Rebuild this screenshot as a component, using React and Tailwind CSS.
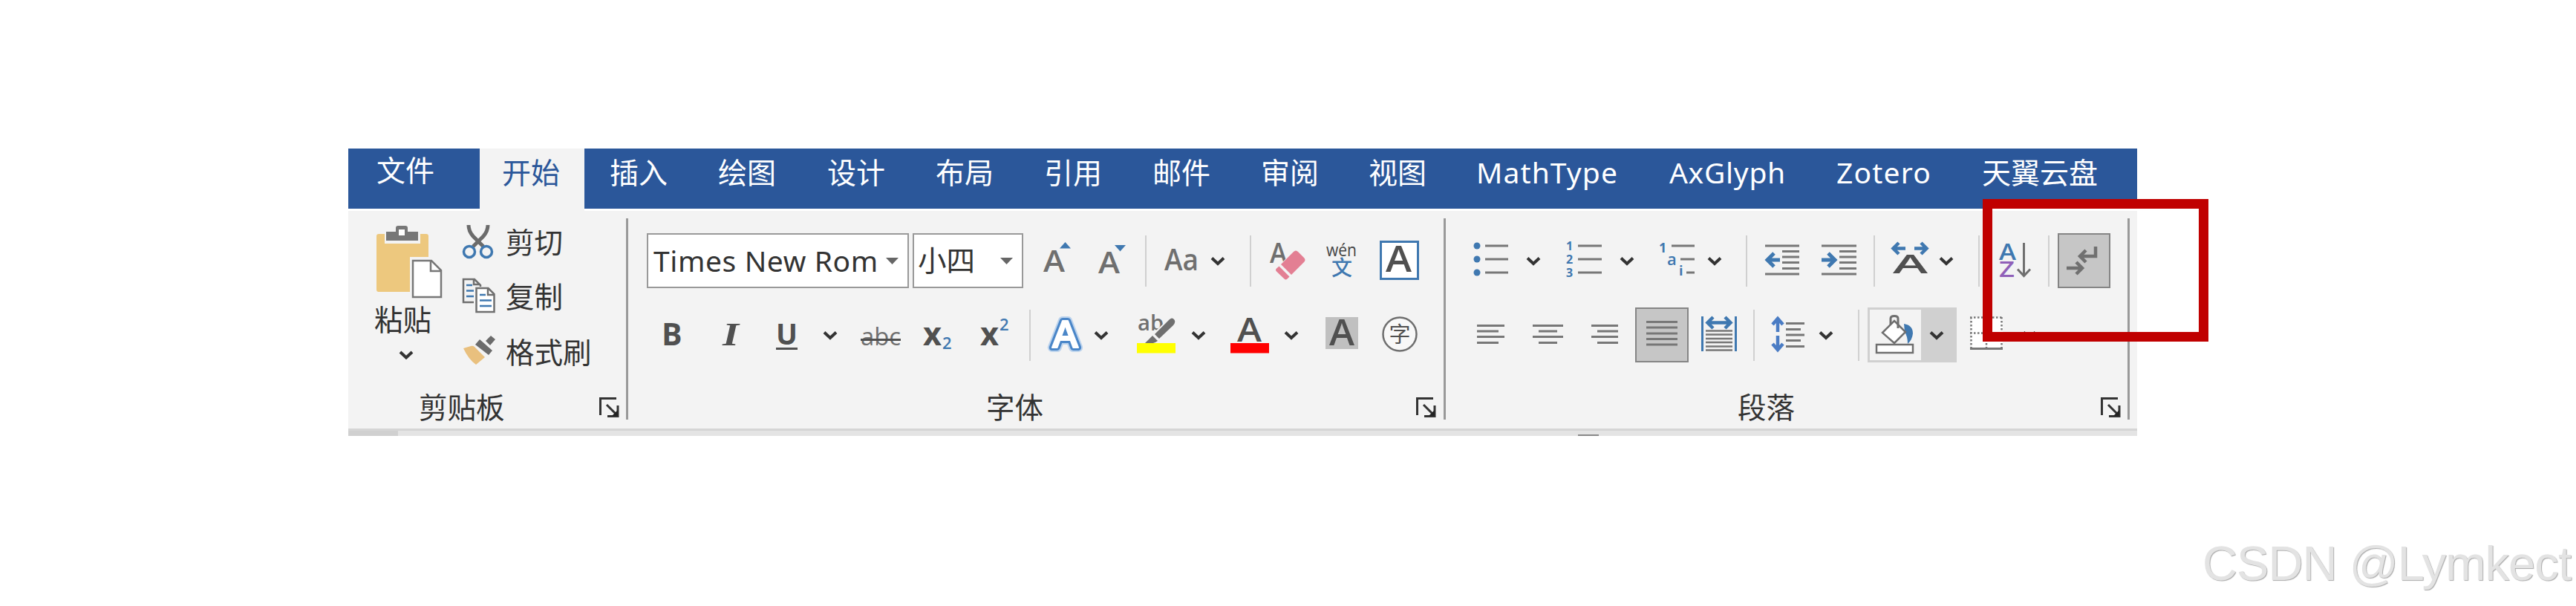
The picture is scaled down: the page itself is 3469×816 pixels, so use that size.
import React from "react";

const BLUE = "#3f78b0";
const GRAY = "#6f6f6f";
const DARK = "#505050";

const tabs = [
  { label: "插入", style: "w-[146px]" },
  { label: "绘图", style: "w-[147px]" },
  { label: "设计", style: "w-[146px]" },
  { label: "布局", style: "w-[146px]" },
  { label: "引用", style: "w-[146px]" },
  { label: "邮件", style: "w-[146px]" },
  { label: "审阅", style: "w-[145px]" },
  { label: "视图", style: "w-[145px]" },
  { label: "MathType", style: "w-[260px] tracking-[1.1px]" },
  { label: "AxGlyph", style: "w-[225px] tracking-[0.7px]" },
  { label: "Zotero", style: "w-[196px] tracking-[1.2px]" },
  { label: "天翼云盘", style: "w-[200px]" },
];

// Every toolbar icon is as tall as a toolbar row
const Icon = ({ w, className = "", children }) => (
  <svg
    width={w}
    height="74"
    viewBox={`0 0 ${w} 74`}
    fill="none"
    className={`shrink-0 overflow-visible font-['Open_Sans','Noto_Sans_CJK_SC',sans-serif] ${className}`}
  >
    {children}
  </svg>
);

const Chevron = ({ className = "" }) => (
  <Icon w={20} className={className}>
    <path d="M2 33.5l8 7.5 8-7.5" stroke="#333" strokeWidth="4" />
  </Icon>
);

const Divider = ({ className = "" }) => (
  <div className={`h-[69px] w-[2px] shrink-0 bg-[#d0d0d0] ${className}`} />
);

const GroupLine = () => (
  <div className="mt-[10px] h-[271px] w-[3px] shrink-0 bg-[#999]" />
);

// rows: list of [x1, x2, y]
const Lines = ({ rows, width = 3 }) => (
  <path
    d={rows.map(([a, b, y]) => `M${a} ${y}H${b}`).join("")}
    stroke="#777"
    strokeWidth={width}
  />
);

const Launcher = () => (
  <svg width="27" height="27" viewBox="0 0 27 27" fill="none" stroke="#333" strokeWidth="3">
    <path d="M1.5 24V1.5H23" />
    <path d="M10 10l14 14M25 11v14.5H11" />
    <path d="M25 17v8h-8z" fill="#222" stroke="none" />
  </svg>
);

const GroupLabel = ({ children, className }) => (
  <div className={`flex h-[44px] items-center text-[38.5px] leading-none text-[#333] ${className}`}>
    {children}
  </div>
);

const Combo = ({ text, className }) => (
  <div className={`flex h-[74px] shrink-0 items-center justify-between border-[2.5px] border-[#999] bg-white text-[#333] ${className}`}>
    <span className="whitespace-nowrap">{text}</span>
    <svg width="17" height="9" viewBox="0 0 17 9" className="shrink-0">
      <path d="M0 0h17l-8.5 9z" fill="#666" />
    </svg>
  </div>
);

const TabBar = () => (
  <div className="flex h-[81px] bg-[#2b579a] text-[39px] leading-none text-white">
    <div className="w-[177px] pt-[9px] pl-[38px]">文件</div>
    <div className="h-[85px] w-[141px] bg-[#f3f3f3] pt-[12px] pl-[30px] text-[#2b579a]">开始</div>
    <div className="flex pt-[12px] pl-[34px]">
      {tabs.map((t) => (
        <div key={t.label} className={`shrink-0 whitespace-nowrap ${t.style}`}>
          {t.label}
        </div>
      ))}
    </div>
  </div>
);

const ClipboardGroup = () => (
  <div className="flex w-[377px]">
    <div className="w-[374px]">
      <div className="flex h-[242px] text-[38.5px] leading-none text-[#333]">
        <div className="flex w-[147px] flex-col pt-[20px] pl-[35px]">
          <svg width="92" height="98" viewBox="0 0 92 98" fill="none" className="ml-[2px]">
            <rect x="1" y="11" width="70" height="78" rx="3" fill="#edc87e" />
            <path d="M12 8h48v16H12z" fill="#f3f3f3" />
            <path d="M14 8h13V3q0-3 3-3h10q3 0 3 3v5h14v12H14z" fill="#777" />
            <rect x="31" y="5" width="8" height="8" fill="#fff" />
            <path d="M46 42h46v56H46z" fill="#f3f3f3" />
            <path d="M50 47h25l13 13v36H50z" fill="#fff" stroke="#777" strokeWidth="2.5" />
            <path d="M74 47v14h14" stroke="#777" strokeWidth="2.5" />
          </svg>
          <span className="mt-[9px] whitespace-nowrap">粘贴</span>
          <svg width="20" height="12" viewBox="0 0 20 12" fill="none" className="mt-[22px] ml-[33px]">
            <path d="M2 2l8 7.5L18 2" stroke="#333" strokeWidth="4" />
          </svg>
        </div>
        <div className="flex flex-col pt-[16px] pl-[6px]">
          <div className="flex h-[52px] gap-[14px]">
            <svg width="45" height="50" viewBox="0 0 45 50" fill="none">
              <path d="M9 3q0 8 6 15l14 14M35 3q0 8-6 15L15 32" stroke="#6b6b6b" strokeWidth="5" />
              <circle cx="10" cy="39" r="7.5" stroke={BLUE} strokeWidth="3.5" />
              <circle cx="33" cy="39" r="7.5" stroke={BLUE} strokeWidth="3.5" />
            </svg>
            <span className="mt-[7px]">剪切</span>
          </div>
          <div className="mt-[22px] flex h-[52px] gap-[14px]">
            <svg width="45" height="48" viewBox="0 0 45 48" fill="none" strokeWidth="2.5">
              <path d="M16 33H2V2h15l8 8v2M16 2v7h9" stroke={GRAY} />
              <path d="M6 10h8M6 17.5h10M6 25h10" stroke={BLUE} />
              <path d="M19.5 14h16l8 8v24h-24z" fill="#fff" stroke={GRAY} />
              <path d="M35 14v9h8" stroke={GRAY} />
              <path d="M24 23h8M24 30.5h16M24 38h16" stroke={BLUE} />
            </svg>
            <span className="mt-[6px]">复制</span>
          </div>
          <div className="mt-[26px] flex h-[52px] gap-[14px]">
            <svg width="45" height="44" viewBox="0 0 45 44" fill="none">
              <path d="M2 17l10-3q3-1 5 1l14 14-12 10q-10-7-17-22z" fill="#e9c07e" />
              <path d="M18 12l6-7 17 15-5 6z" fill="#6b6b6b" />
              <path d="M32 7l7-7 6 5-7 8z" fill="#6b6b6b" />
            </svg>
            <span className="mt-[3px] whitespace-nowrap">格式刷</span>
          </div>
        </div>
      </div>
      <div className="flex items-center">
        <GroupLabel className="w-[338px] pl-[95px]">剪贴板</GroupLabel>
        <Launcher />
      </div>
    </div>
    <GroupLine />
  </div>
);

const FontGroup = () => (
  <div className="flex w-[1101px]">
    <div className="w-[1098px] pt-[30px]">
      <div className="flex items-center">
        <Combo text="Times New Rom" className="ml-[25px] w-[353px] pr-[12px] pl-[7px] text-[39px] tracking-[0.6px]" />
        <Combo text="小四" className="ml-[5px] w-[149px] pr-[12px] pl-[5px] text-[38.5px]" />
        <Icon w={38} className="ml-[27px]">
          <text x="0" y="52" fontSize="39" fontWeight="600" fill={GRAY} textLength="29" lengthAdjust="spacingAndGlyphs">A</text>
          <path d="M22 20.5L29.5 12l7.5 8.5z" fill={BLUE} />
        </Icon>
        <Icon w={38} className="ml-[36px]">
          <text x="0" y="54" fontSize="39" fontWeight="600" fill={GRAY} textLength="29" lengthAdjust="spacingAndGlyphs">A</text>
          <path d="M22 16l7.5 8.5L37 16z" fill={BLUE} />
        </Icon>
        <Divider className="ml-[25px]" />
        <Icon w={46} className="ml-[24px]">
          <text x="0" y="49.5" fontSize="39" fontWeight="600" fill={GRAY} textLength="46" lengthAdjust="spacingAndGlyphs">Aa</text>
        </Icon>
        <Chevron className="ml-[16px]" />
        <Divider className="ml-[33px]" />
        <Icon w={48} className="ml-[25px]">
          <text x="0" y="40" fontSize="37" fontWeight="600" fill={GRAY} textLength="23" lengthAdjust="spacingAndGlyphs">A</text>
          <path d="M34 22l14 12-23 29L7 49z" fill="#f3f3f3" />
          <path d="M32 25q3-3 6 0l8 8q3 3 0 6L29 56 15 42z" fill="#e37f93" />
          <path d="M12.5 44.5l14 14-3 3q-2 2-4 0L9 51.5q-2-2 0-4z" fill="#e37f93" />
        </Icon>
        <Icon w={43} className="ml-[27px]">
          <text x="1" y="31" fontSize="23" fontWeight="500" fill="#444" textLength="41" lengthAdjust="spacingAndGlyphs">wén</text>
          <text x="8" y="57" fontSize="28" fontWeight="500" fill={BLUE}>文</text>
        </Icon>
        <Icon w={53} className="ml-[30px]">
          <rect x="1.5" y="11.5" width="50" height="50" fill="#fff" stroke={BLUE} strokeWidth="3" />
          <text x="8" y="51.5" fontSize="49" fontWeight="600" fill={DARK} textLength="35" lengthAdjust="spacingAndGlyphs">A</text>
        </Icon>
      </div>

      <div className="mt-[26px] flex items-center">
        <Icon w={27} className="ml-[46px]">
          <text x="-1" y="50.5" fontSize="41" fontWeight="700" fill={DARK}>B</text>
        </Icon>
        <Icon w={26} className="ml-[53px]">
          <text x="1" y="50.5" fontSize="45" fontWeight="700" fontStyle="italic" fill={DARK} fontFamily="Liberation Serif" textLength="22" lengthAdjust="spacingAndGlyphs">I</text>
        </Icon>
        <Icon w={31} className="ml-[46px]">
          <text x="1" y="50" fontSize="40" fontWeight="700" fill={DARK} textLength="29" lengthAdjust="spacingAndGlyphs">U</text>
          <path d="M1 55.5h29" stroke={DARK} strokeWidth="3" />
        </Icon>
        <Chevron className="ml-[33px]" />
        <Icon w={54} className="ml-[31px]">
          <text x="0" y="51" fontSize="33" fontWeight="500" fill={GRAY} textLength="54" lengthAdjust="spacingAndGlyphs">abc</text>
          <path d="M0 43.5h54" stroke={DARK} strokeWidth="3" />
        </Icon>
        <Icon w={41} className="ml-[30px]">
          <text x="0" y="50.5" fontSize="43" fontWeight="700" fill={DARK} textLength="25" lengthAdjust="spacingAndGlyphs">x</text>
          <text x="26" y="56" fontSize="22" fontWeight="600" fill={BLUE}>2</text>
        </Icon>
        <Icon w={40} className="ml-[36px]">
          <text x="0" y="50.5" fontSize="43" fontWeight="700" fill={DARK} textLength="25" lengthAdjust="spacingAndGlyphs">x</text>
          <text x="26" y="31" fontSize="22" fontWeight="600" fill={BLUE}>2</text>
        </Icon>
        <Divider className="ml-[26px]" />
        <Icon w={41} className="ml-[26px]">
          <g fontSize="51" fontWeight="600" strokeLinejoin="round">
            <text x="3" y="54" stroke="#bcd3ed" strokeWidth="12" textLength="35" lengthAdjust="spacingAndGlyphs">A</text>
            <text x="3" y="54" stroke="#4a86c8" strokeWidth="8" textLength="35" lengthAdjust="spacingAndGlyphs">A</text>
            <text x="3" y="54" fill="#fff" stroke="#fff" strokeWidth="2" textLength="35" lengthAdjust="spacingAndGlyphs">A</text>
          </g>
        </Icon>
        <Chevron className="ml-[18px]" />
        <Icon w={54} className="ml-[37px]">
          <text x="2" y="31" fontSize="28" fontWeight="600" fill={GRAY} textLength="35" lengthAdjust="spacingAndGlyphs">ab</text>
          <path d="M45 17q4-4 7 0 2 3-1 6L27 49H10z" fill="#f3f3f3" stroke="#f3f3f3" strokeWidth="4" />
          <path d="M43 18q5-6 8-2 3 3-1 8L31 42l-6-6z" fill={GRAY} />
          <path d="M22 38l7 7q-6 5-18 4z" fill={GRAY} />
          <rect x="1" y="48" width="52" height="13.5" fill="#ff0" />
        </Icon>
        <Chevron className="ml-[20px]" />
        <Icon w={54} className="ml-[32px]">
          <text x="10" y="46" fontSize="46" fontWeight="600" fill={DARK} textLength="33" lengthAdjust="spacingAndGlyphs">A</text>
          <rect x="1" y="48" width="52" height="13.5" fill="#f00" />
        </Icon>
        <Chevron className="ml-[19px]" />
        <Icon w={44} className="ml-[36px]">
          <rect y="13" width="44" height="43" fill="#c0c0c0" />
          <text x="5" y="51" fontSize="49" fontWeight="600" fill={DARK} textLength="34" lengthAdjust="spacingAndGlyphs">A</text>
        </Icon>
        <Icon w={50} className="ml-[31px]">
          <circle cx="25" cy="36" r="22.5" fill="#f8f8f8" stroke={GRAY} strokeWidth="2.5" />
          <text x="10.5" y="47" fontSize="29" fill={DARK}>字</text>
        </Icon>
      </div>

      <div className="mt-[38px] flex items-center">
        <GroupLabel className="w-[1061px] pl-[482px]">字体</GroupLabel>
        <Launcher />
      </div>
    </div>
    <GroupLine />
  </div>
);

const ParagraphGroup = () => (
  <div className="flex">
    <div className="w-[918px] pt-[30px]">
      <div className="flex items-center">
        <Icon w={48} className="ml-[37px]">
          <g fill={BLUE}>
            <circle cx="5" cy="17" r="4.5" />
            <circle cx="5" cy="35" r="4.5" />
            <circle cx="5" cy="53" r="4.5" />
          </g>
          <Lines rows={[[16, 47, 17], [16, 47, 35], [16, 47, 53]]} />
        </Icon>
        <Chevron className="ml-[23px]" />
        <Icon w={48} className="ml-[34px]">
          <g fill={BLUE} fontSize="16" fontWeight="700">
            <text x="0" y="23">1</text>
            <text x="0" y="41">2</text>
            <text x="0" y="59">3</text>
          </g>
          <Lines rows={[[16, 48, 17], [16, 48, 35], [16, 48, 53]]} />
        </Icon>
        <Chevron className="ml-[24px]" />
        <Icon w={49} className="ml-[33px]">
          <g fill={BLUE} fontWeight="700">
            <text x="0" y="26" fontSize="18">1</text>
            <text x="11" y="43" fontSize="22" fontWeight="600">a</text>
            <text x="27" y="57" fontSize="18">i</text>
          </g>
          <Lines rows={[[17, 48, 17], [29, 48, 35], [37, 48, 53]]} />
        </Icon>
        <Chevron className="ml-[16px]" />
        <Divider className="ml-[32px]" />
        <Icon w={48} className="ml-[23px]">
          <Lines rows={[[1, 47, 17], [24, 47, 24.5], [24, 47, 32], [24, 47, 39.5], [24, 47, 47.5], [1, 47, 55]]} />
          <path d="M21 36H4M13 27l-9 9 9 9" stroke={BLUE} strokeWidth="5" />
        </Icon>
        <Icon w={48} className="ml-[29px]">
          <Lines rows={[[0, 47, 17], [24, 47, 24.5], [24, 47, 32], [24, 47, 39.5], [24, 47, 47.5], [0, 47, 55]]} />
          <path d="M0 36h18M9 27l9 9-9 9" stroke={BLUE} strokeWidth="5" />
        </Icon>
        <Divider className="ml-[22px]" />
        <Icon w={52} className="ml-[21px]">
          <path d="M20 20.5H4M11 13l-7.5 7.5L11 28M32 20.5h16M41 13l7.5 7.5L41 28" stroke={BLUE} strokeWidth="4.5" />
          <text x="3" y="54" fontSize="35" fontWeight="600" fill={DARK} textLength="47" lengthAdjust="spacingAndGlyphs">A</text>
        </Icon>
        <Chevron className="ml-[13px]" />
        <Divider className="ml-[33px]" />
        <Icon w={46} className="ml-[25px]">
          <text x="1" y="36" fontSize="31" fontWeight="600" fill={BLUE} textLength="23" lengthAdjust="spacingAndGlyphs">A</text>
          <text x="1" y="59" fontSize="28" fontWeight="600" fill="#9060b8" textLength="21" lengthAdjust="spacingAndGlyphs">Z</text>
          <path d="M34.5 13v44M26 48.5l8.5 9 8.5-9" stroke={GRAY} strokeWidth="3" />
        </Icon>
        <Divider className="ml-[21px]" />
        <div className="ml-[11px] h-[74px] w-[71px] border-[2.5px] border-[#858585] bg-[#c6c6c6]">
          <svg width="67" height="70" viewBox="0 0 67 70" fill="none" stroke="#707070" strokeWidth="4.5">
            <path d="M49 16v13H28M36 21l-8 8 8 8" />
            <path d="M10 45h20M23 37l8 8-8 8" />
          </svg>
        </div>
      </div>

      <div className="mt-[26px] flex items-center">
        <Icon w={37} className="ml-[42px]">
          <Lines rows={[[0, 37, 24.5], [0, 29, 32], [0, 37, 39.5], [0, 29, 47.5]]} />
        </Icon>
        <Icon w={41} className="ml-[38px]">
          <Lines rows={[[0, 41, 24.5], [8, 33, 32], [0, 41, 39.5], [8, 33, 47.5]]} />
        </Icon>
        <Icon w={36} className="ml-[38px]">
          <Lines rows={[[0, 36, 24.5], [8, 36, 32], [0, 36, 39.5], [8, 36, 47.5]]} />
        </Icon>
        <div className="ml-[23px] h-[74px] w-[72px] border-[2.5px] border-[#858585] bg-[#c6c6c6]">
          <svg width="68" height="70" viewBox="0 0 68 70">
            <Lines rows={[[13, 55, 17.5], [13, 55, 25], [13, 55, 33], [13, 55, 40.5], [13, 55, 48]]} />
          </svg>
        </div>
        <Icon w={50} className="ml-[16px]">
          <path d="M2.5 12v47M47.5 12v47" stroke={BLUE} strokeWidth="3" />
          <path d="M10 20.5h30M17 13l-7.5 7.5L17 28M33 13l7.5 7.5L33 28" stroke={BLUE} strokeWidth="4.5" />
          <Lines rows={[[7, 43, 31.5], [7, 43, 36.5], [7, 43, 42], [7, 43, 47], [7, 43, 52.5], [7, 43, 57.5]]} width={2.5} />
        </Icon>
        <Divider className="ml-[21px]" />
        <Icon w={46} className="ml-[22px]">
          <path d="M9 33V15M2 23l7-8 7 8M9 38v18M2 49l7 8 7-8" stroke="#4a7cc4" strokeWidth="4.5" />
          <Lines rows={[[20, 45, 21.5], [20, 40, 29.5], [20, 45, 37], [20, 40, 44.5], [20, 45, 52.5]]} />
        </Icon>
        <Chevron className="ml-[18px]" />
        <Divider className="ml-[33px]" />
        <div className="ml-[11px] flex h-[74px] w-[120px] border-[3px] border-[#d0d0d0] bg-[#d0d0d0]">
          <svg width="69" height="68" viewBox="0 0 69 68" fill="none" className="bg-[#f3f3f3]">
            <path d="M46 19q12 2 12 13-1 9-7 14 0-10-4-16z" fill={BLUE} />
            <path d="M17 31l16-16 15 15-15 15z" fill="#fff" stroke={GRAY} strokeWidth="2.5" />
            <path d="M28 20v-8q0-3.5 5-3.5t5 3.5v13" stroke={GRAY} strokeWidth="3" />
            <rect x="9" y="47" width="49" height="11" fill="#fff" stroke={GRAY} strokeWidth="2.5" />
          </svg>
          <Chevron className="-mt-[3px] ml-[11px]" />
        </div>
        <Icon w={44} className="ml-[18px]">
          <path d="M1 13h43v44H1z" fill="#fff" />
          <path d="M0 13.5h44M1.5 13v44M42.5 13v44M0 34.5h44M22 13v44" stroke="#777" strokeWidth="2.5" strokeDasharray="2.5 2.5" />
          <path d="M0 55.5h44" stroke="#777" strokeWidth="3" />
        </Icon>
        <Chevron className="ml-[26px]" />
      </div>

      <div className="mt-[38px] flex items-center">
        <GroupLabel className="w-[882px] pl-[393px]">段落</GroupLabel>
        <Launcher />
      </div>
    </div>
    <GroupLine />
  </div>
);

const App = () => {
  return (
    <div className="relative h-[816px] w-[3469px] overflow-hidden bg-white pt-[200px] pl-[469px] font-['Noto_Sans','Noto_Sans_CJK_SC',sans-serif]">
      <div className="w-[2409px]">
        <TabBar />
        {/* Ribbon body */}
        <div className="mt-[3px] flex h-[293px] bg-[#f3f3f3]">
          <ClipboardGroup />
          <FontGroup />
          <ParagraphGroup />
        </div>
        {/* Top edge of the document area */}
        <div className="flex h-[10px] items-end border-t-[3px] border-[#d5d5d5] bg-[#e4e4e4]">
          <div className="h-full w-[67px] bg-[#d0d0d0]" />
          <div className="ml-[1589px] h-[2px] w-[28px] bg-[#888]" />
        </div>
      </div>

      {/* Highlight around the paragraph mark button */}
      <div className="absolute top-[268px] left-[2670px] h-[192px] w-[304px] border-[13px] border-[#c00000]" />

      <div className="absolute top-[723px] left-[2966px] font-['Liberation_Sans',sans-serif] text-[65px] leading-[72px] tracking-[-0.9px] whitespace-nowrap text-[#e3e3e3] [text-shadow:1px_1px_1px_#aaa]">
        CSDN @Lymkect
      </div>
    </div>
  );
};

export default App;
